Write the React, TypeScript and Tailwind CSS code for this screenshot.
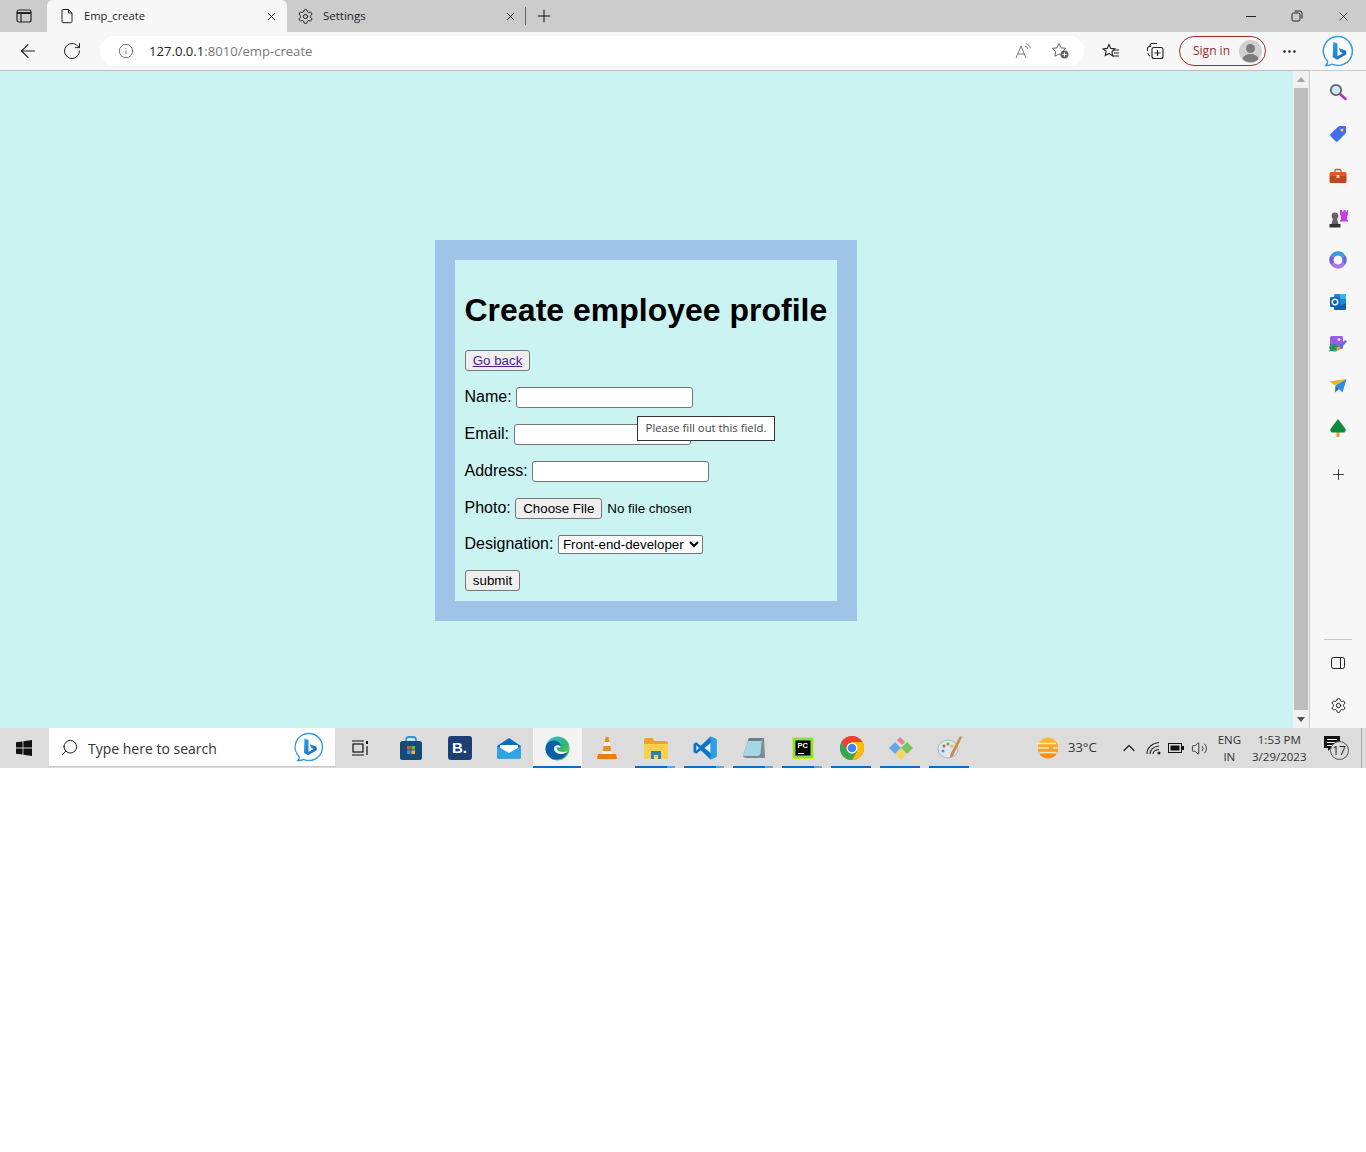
import React from 'react';
import { ArrowLeft, RotateCw, Info, X, Plus, Settings, MoreHorizontal, ChevronUp, Search, Volume2 } from 'lucide-react';

const BingLogo = ({ size = 30 }: { size?: number }) => (
  <svg width={size} height={size} viewBox="0 0 30 30">
    <defs>
      <linearGradient id="bingb" x1="0" y1="0" x2="1" y2="1">
        <stop offset="0" stopColor="#29a3e8" />
        <stop offset="1" stopColor="#1b5fc4" />
      </linearGradient>
    </defs>
    <path d="M15 1.500a13.500 13.500 0 1 1-5.600 25.800c-1.600 1-3.600 1.400-5.600 1.200 1-1 1.500-2.300 1.500-3.800A13.500 13.500 0 0 1 15 1.500z" fill="#fff" stroke="#2f9be0" strokeWidth="1.400" />
    <path d="M10.500 6.500l4 1.400v12l5-2.900-2.400-1.200-1.400-3.500 7 2.400v3.600l-8.500 5-4.200-2.400z" fill="url(#bingb)" />
  </svg>
);

const TabPageIcon = () => (
  <svg width="14" height="16" viewBox="0 0 14 16" fill="none" stroke="#222" strokeWidth="1">
    <path d="M2.500 1.500h6l3.500 3.500v8.500a1.200 1.200 0 0 1-1.200 1.200H3.200A1.200 1.200 0 0 1 2 13.500V2a.5.5 0 0 1 .5-.5z" />
    <path d="M8.500 1.500V5H12" />
  </svg>
);

const SidebarToggle = () => (
  <svg width="16" height="14" viewBox="0 0 16 14" fill="none" stroke="#222" strokeWidth="1.200">
    <rect x="1" y="1" width="14" height="12" rx="2" />
    <path d="M1 4h14" strokeWidth="2" />
    <path d="M5 4v9" />
  </svg>
);

const RestoreIcon = () => (
  <svg width="12" height="12" viewBox="0 0 12 12" fill="none" stroke="#222" strokeWidth="1">
    <rect x="1" y="3" width="8" height="8" rx="1.500" />
    <path d="M3.500 1h5.500a2 2 0 0 1 2 2v5.500" />
  </svg>
);

const ReadAloud = () => (
  <svg width="18" height="16" viewBox="0 0 18 16" fill="none" stroke="#777" strokeWidth="1">
    <path d="M1 15L6 3l5 12M3 11h6" />
    <path d="M10 3c1.500.5 2.300 1.300 2.800 2.800M11 .8c2.500.7 3.800 2.200 4.500 4.500" />
  </svg>
);

const FavAdd = () => (
  <svg width="19" height="18" viewBox="0 0 19 18">
    <path d="M8 1.500l2 4.300 4.700.6-3.400 3.200.8 4.600L8 12l-4.100 2.200.8-4.600L1.300 6.400 6 5.800z" fill="none" stroke="#666" strokeWidth="1" />
    <circle cx="13.500" cy="12.500" r="4" fill="#666" />
    <path d="M13.500 10.500v4M11.500 12.500h4" stroke="#fff" strokeWidth="1" />
  </svg>
);

const Favorites = () => (
  <svg width="18" height="17" viewBox="0 0 18 17" fill="none" stroke="#222" strokeWidth="1.100">
    <path d="M7 1.500l1.800 3.900 4.200.5-3.100 2.900.8 4.200L7 10.400l-3.700 2.100.8-4.200L1 5.900l4.200-.5z" />
    <path d="M12 7h5M12 10h5M11 13h6" />
  </svg>
);

const Collections = () => (
  <svg width="18" height="18" viewBox="0 0 18 18" fill="none" stroke="#222" strokeWidth="1.100">
    <path d="M4 5V3.500A2 2 0 0 1 6 1.500h5" />
    <path d="M1.500 9V6.500a2 2 0 0 1 2-2H5M2 11c0 1.500.5 2.500 2 3" />
    <rect x="6" y="5.500" width="11" height="11" rx="2" />
    <path d="M11.500 8v6M8.500 11h6" />
  </svg>
);

const Avatar = () => (
  <svg width="23" height="23" viewBox="0 0 23 23">
    <circle cx="11.500" cy="11.500" r="11.500" fill="#d1d1d1" />
    <circle cx="11.500" cy="8.500" r="4.500" fill="#7c7c7c" />
    <path d="M3.500 19c1-3.500 4-5 8-5s7 1.500 8 5a11.500 11.500 0 0 1-16 0z" fill="#7c7c7c" />
  </svg>
);

const SideSearch = () => (
  <svg width="18" height="18" viewBox="0 0 18 18">
    <path d="M11 11l5.500 5" stroke="#c026d3" strokeWidth="2.600" strokeLinecap="round" />
    <circle cx="7" cy="7" r="5.200" fill="#cfe6f5" stroke="#5f6368" strokeWidth="1.800" />
  </svg>
);

const SideTag = () => (
  <svg width="18" height="18" viewBox="0 0 18 18">
    <path d="M10.500 1h5.300A1.200 1.200 0 0 1 17 2.200v5.300a1.500 1.500 0 0 1-.5 1.100L8.800 16.300a1.600 1.600 0 0 1-2.200 0l-5-5a1.600 1.600 0 0 1 0-2.200l7.800-7.700a1.500 1.500 0 0 1 1.100-.4z" fill="#3f6ff0" />
    <circle cx="13" cy="5" r="1.600" fill="#f5c14e" />
  </svg>
);

const SideTools = () => (
  <svg width="18" height="16" viewBox="0 0 18 16">
    <path d="M6 4V2.500A1 1 0 0 1 7 1.500h4a1 1 0 0 1 1 1V4" fill="none" stroke="#8a6a5a" strokeWidth="1.300" />
    <path d="M2 4h14a1.500 1.500 0 0 1 1.500 1.500V8H.5V5.500A1.500 1.500 0 0 1 2 4z" fill="#e0592a" />
    <path d="M.5 8h17v5.500A1.500 1.500 0 0 1 16 15H2a1.500 1.500 0 0 1-1.500-1.500z" fill="#c4441c" />
    <rect x="7.500" y="7" width="3" height="3" rx=".5" fill="#f3d1b8" />
  </svg>
);

const SideChess = () => (
  <svg width="19" height="19" viewBox="0 0 19 19">
    <path d="M11 1h2v1.500h1.500V1h2v1.500H18V1h1v5l-1 1v4h1v1.500h-8V11h1V7l-1-1z" fill="#c63de8" />
    <circle cx="6" cy="7" r="3.400" fill="#666" />
    <path d="M4 9.500h4l1.500 5.500h-7z" fill="#666" />
    <path d="M.5 15h11v3.500H.5z" fill="#333" />
  </svg>
);

const SideOffice = () => (
  <svg width="18" height="18" viewBox="0 0 18 18" fill="none" strokeWidth="4.200">
    <path d="M3.500 12.500A6.500 6.500 0 0 1 3.500 5.500" stroke="#7a5ad8" />
    <path d="M3.500 5.500A6.500 6.500 0 0 1 14.500 5.500" stroke="#3b9be0" />
    <path d="M14.500 5.500A6.500 6.500 0 0 1 14.500 12.500" stroke="#5b6fe0" />
    <path d="M14.500 12.500A6.500 6.500 0 0 1 3.500 12.500" stroke="#a877e8" />
  </svg>
);

const SideOutlook = () => (
  <svg width="18" height="18" viewBox="0 0 18 18">
    <rect x="5" y="1" width="12" height="16" rx="1.500" fill="#1e88d8" />
    <path d="M5 10l6 3 6-3v5.500A1.500 1.500 0 0 1 15.500 17h-9A1.500 1.500 0 0 1 5 15.500z" fill="#0f5fa8" />
    <rect x="11" y="1" width="6" height="5" fill="#37b0ee" />
    <rect x="1" y="4" width="10" height="10" rx="1.500" fill="#0a63b5" />
    <circle cx="6" cy="9" r="2.800" fill="none" stroke="#fff" strokeWidth="1.400" />
  </svg>
);

const SideImage = () => (
  <svg width="20" height="18" viewBox="0 0 20 18">
    <rect x="2" y="1" width="13" height="13" rx="1.500" fill="#9a5bea" />
    <circle cx="11" cy="4.500" r="1.500" fill="#f1d8ff" />
    <path d="M1 12l5-4 6 5v2H2z" fill="#1f9a66" />
    <path d="M10 12l7-7 2 1.500-7 7.500z" fill="#5a6df0" />
    <circle cx="10.500" cy="13.500" r="2" fill="#e8a52a" />
    <path d="M1 16c3-1.500 5 .8 8-.5" fill="none" stroke="#2b8f5f" strokeWidth="1.200" />
  </svg>
);

const SideSend = () => (
  <svg width="18" height="14" viewBox="0 0 18 14">
    <path d="M0 2.500L17.500 0 6.500 6.500z" fill="#f0b32a" />
    <path d="M17.500 0L6.500 6.500l7 7z" fill="#2a8fe0" />
    <path d="M6.500 6.500l-.5 7 4-3.500z" fill="#2565b8" />
  </svg>
);

const SideTree = () => (
  <svg width="16" height="18" viewBox="0 0 16 18">
    <rect x="6.500" y="13" width="3" height="5" fill="#e8a02a" />
    <path d="M8 0l3.500 4.500 4 5.500c.5 1-.2 3.500-1.500 3.500H2C.7 13.500 0 11 .5 10l4-5.500z" fill="#0f8a3c" />
  </svg>
);

const PanelIcon = () => (
  <svg width="14" height="12" viewBox="0 0 14 12" fill="none" stroke="#222" strokeWidth="1">
    <rect x=".5" y=".5" width="13" height="11" rx="2" />
    <path d="M9.500 .5v11" />
  </svg>
);

const WinLogo = () => (
  <svg width="16" height="16" viewBox="0 0 16 16" fill="#111">
    <path d="M0 2.300l6.600-.9v6.200H0zM7.400 1.300L16 0v7.600H7.400zM0 8.400h6.600v6.200L0 13.700zM7.400 8.400H16V16l-8.600-1.200z" />
  </svg>
);

const TaskView = () => (
  <svg width="18" height="16" viewBox="0 0 18 16" fill="none" stroke="#111" strokeWidth="1.200">
    <path d="M1 1h12M1 15h12" />
    <rect x="2" y="4" width="10" height="8" />
    <path d="M16 1v3" strokeWidth="2" />
    <path d="M16 6v9" />
  </svg>
);

const StoreIcon = () => (
  <svg width="24" height="24" viewBox="0 0 24 24">
    <path d="M7 6V4a3 3 0 0 1 3-3h4a3 3 0 0 1 3 3v2" fill="none" stroke="#2a9ad8" strokeWidth="1.800" />
    <rect x="1" y="5" width="22" height="19" rx="2.500" fill="#174a78" />
    <rect x="8" y="10" width="3.600" height="3.600" fill="#e8542a" />
    <rect x="12.400" y="10" width="3.600" height="3.600" fill="#5fb82a" />
    <rect x="8" y="14.400" width="3.600" height="3.600" fill="#2a9ad8" />
    <rect x="12.400" y="14.400" width="3.600" height="3.600" fill="#f5b81f" />
  </svg>
);

const MailIcon = () => (
  <svg width="26" height="22" viewBox="0 0 26 22">
    <path d="M13 1L1 9v11a1.500 1.500 0 0 0 1.500 1.500h21A1.500 1.500 0 0 0 25 20V9z" fill="#0f6cbd" />
    <path d="M4 8h18v6l-9 4-9-4z" fill="#fff" />
    <path d="M1 9l12 7 12-7v11a1.500 1.500 0 0 1-1.500 1.500h-21A1.500 1.500 0 0 1 1 20z" fill="#2fa3e6" />
  </svg>
);

const EdgeIcon = () => (
  <svg width="25" height="25" viewBox="0 0 25 25">
    <defs>
      <linearGradient id="edgeg" x1="0" y1="0" x2="1" y2="1">
        <stop offset="0" stopColor="#35c1f1" />
        <stop offset=".55" stopColor="#2cb56f" />
        <stop offset="1" stopColor="#7fd64a" />
      </linearGradient>
    </defs>
    <circle cx="12.500" cy="12.500" r="12" fill="url(#edgeg)" />
    <path d="M.5 12.500C1.500 6 7 3.500 11.500 5c3.500 1.200 4.800 4 4 6.500H9c-.5 3.500 2.500 6.500 7 6.500 2.500 0 5-1 7-2.500-1.800 5-6 8-11 8C5 23.500.5 18.500.5 12.500z" fill="#0b5da8" />
    <path d="M9 11.500c1-2.500 4-3 6.500-1.500 0 .5 0 1 0 1.500z" fill="#fff" />
    <path d="M9 11.500c-.5 3.500 2.500 6.500 7 6.500 2.500 0 5-1 7-2.500-3 .5-9 1-10.500-1.500-.7-1.200-.5-2-.5-2.500z" fill="#fff" />
  </svg>
);

const VlcIcon = () => (
  <svg width="20" height="24" viewBox="0 0 20 24">
    <path d="M8.500 1h3l1 5h-5z" fill="#f08a1d" />
    <path d="M7.500 6h5l.8 4H6.700z" fill="#f3f0ea" />
    <path d="M6.700 10h6.600l1 5H5.700z" fill="#f08a1d" />
    <path d="M5.700 15h8.600l.7 3H5z" fill="#f3f0ea" />
    <path d="M1 18h18l1 5H0z" fill="#e87b12" />
  </svg>
);

const FilesIcon = () => (
  <svg width="24" height="21" viewBox="0 0 24 21">
    <path d="M0 1.500A1.500 1.500 0 0 1 1.500 0h7l2 3h12A1.500 1.500 0 0 1 24 4.500V9H0z" fill="#e8a52a" />
    <path d="M0 6h24v13.500a1.500 1.500 0 0 1-1.500 1.500h-21A1.500 1.500 0 0 1 0 19.500z" fill="#fbd04e" />
    <rect x="7" y="13" width="10" height="8" fill="#2a7fc0" />
    <rect x="10" y="17" width="4" height="4" fill="#fbd04e" />
  </svg>
);

const VsCodeIcon = () => (
  <svg width="24" height="24" viewBox="0 0 24 24">
    <path d="M17.500 .5L23.500 3.300v17.400l-6 2.800L7.800 14.200l-4.500 3.500L.5 16.300V7.700l2.800-1.400 4.500 3.500z" fill="#0f74c4" />
    <path d="M17.500 .5l6 2.800v17.400l-6 2.800z" fill="#2b9fe6" />
    <path d="M17.500 7l-6 5 6 5z" fill="#e2eefb" />
    <path d="M3.400 9.200L6 12l-2.600 2.800z" fill="#e2eefb" />
  </svg>
);

const NotepadIcon = () => (
  <svg width="24" height="24" viewBox="0 0 24 24">
    <path d="M7 2h15l1 20H5c-2 0-4-1-4-2z" fill="#7d8b90" />
    <path d="M7 3h13l-1.500 14c-.3 2-1.500 3-3 3H1z" fill="#a6d5e6" />
    <path d="M7 2h13l-.5 3H6z" fill="#6d7f86" />
  </svg>
);

const PyCharmIcon = () => (
  <svg width="22" height="22" viewBox="0 0 22 22">
    <rect width="22" height="22" fill="#dfe62a" />
    <rect x="1" y="1" width="20" height="20" fill="#21d789" opacity=".5" />
    <rect x="3.500" y="3.500" width="15" height="15" fill="#000" />
    <path d="M6 16h6v1H6z" fill="#fff" />
    <text x="5.500" y="11" fontSize="7.500" fontWeight="700" fill="#fff" fontFamily="Liberation Sans, sans-serif">PC</text>
  </svg>
);

const ChromeIcon = () => (
  <svg width="24" height="24" viewBox="0 0 24 24">
    <circle cx="12" cy="12" r="12" fill="#ea4335" />
    <path d="M12 24a12 12 0 0 0 10.400-18H12l5.200 9z" fill="#fbbc05" />
    <path d="M12 24l5.200-9L12 12H7l-5.400-6A12 12 0 0 0 12 24z" fill="#34a853" />
    <path d="M1.600 6A12 12 0 0 1 22.400 6H12a6 6 0 0 0-5.200 9z" fill="#ea4335" />
    <circle cx="12" cy="12" r="5.500" fill="#fff" />
    <circle cx="12" cy="12" r="4.300" fill="#4285f4" />
  </svg>
);

const GemIcon = () => (
  <svg width="26" height="26" viewBox="0 0 26 26">
    <path d="M1 13l6-6 6 6-6 6z" fill="#6aa5ee" />
    <path d="M13 13l6-6 6 6-6 6z" fill="#77c45e" />
    <path d="M7 19l6-6 6 6-6 6z" fill="#f3d76a" />
    <path d="M9 5l3-3 5 5-3 3z" fill="#e8838a" />
  </svg>
);

const PaintIcon = () => (
  <svg width="26" height="26" viewBox="0 0 26 26">
    <ellipse cx="11" cy="14" rx="10" ry="9" fill="#dbe7ec" stroke="#9fb0b8" strokeWidth=".8" />
    <circle cx="7" cy="11" r="1.500" fill="#e0524a" />
    <circle cx="11" cy="9" r="1.500" fill="#59b64a" />
    <circle cx="6" cy="16" r="1.500" fill="#4a8fe0" />
    <circle cx="15" cy="11" r="1.500" fill="#efb62e" />
    <path d="M23 1l2 1-9 19-3 2 .5-4z" fill="#c98a45" />
  </svg>
);

const SunIcon = () => (
  <svg width="22" height="22" viewBox="0 0 22 22">
    <defs>
      <linearGradient id="sung" x1="0" y1="0" x2="0" y2="1">
        <stop offset="0" stopColor="#fbc02d" />
        <stop offset="1" stopColor="#f08a1d" />
      </linearGradient>
    </defs>
    <circle cx="11" cy="11" r="10.500" fill="url(#sung)" />
    <path d="M0 6.500h19M0 11h12M16 11h6M2 15.500h18" stroke="#f6e6b8" strokeWidth="1.400" />
  </svg>
);

const WifiIcon = () => (
  <svg width="16" height="14" viewBox="0 0 16 14" fill="none" stroke="#222" strokeWidth="1.100">
    <path d="M1 13C1 7 6 2 13 1.500M4 13c0-4 3.500-7.500 9-8M7 13c0-2.200 2-4 6-4.500" />
    <circle cx="13" cy="12" r="1.500" fill="#222" stroke="none" />
  </svg>
);

const BatteryIcon = () => (
  <svg width="16" height="10" viewBox="0 0 16 10">
    <rect x=".5" y=".5" width="13" height="9" fill="none" stroke="#111" strokeWidth="1" />
    <rect x="2.500" y="2.500" width="9" height="5" fill="#111" />
    <rect x="14" y="3" width="2" height="4" fill="#111" />
  </svg>
);

const NotifIcon = () => (
  <div className="relative w-[26px] h-[24px]">
    <svg width="17" height="17" viewBox="0 0 17 17" className="absolute left-0 top-0">
      <path d="M0 0h16v12H7l-3 3v-3H0z" fill="#111" />
      <path d="M3 3.500h10M3 6.500h10M3 9.500h7" stroke="#fff" strokeWidth="1" />
    </svg>
    <div className="absolute left-[6px] top-[5px] w-[19px] h-[19px] rounded-full border border-[#555] bg-[#dcdcdc] flex items-center justify-center text-[12px] text-[#222]">17</div>
  </div>
);

const taskItems: { icon: React.ReactNode; bar?: 'on' | 'stack' | 'active' }[] = [
  { icon: <div className="-translate-x-0.5"><TaskView /></div> },
  { icon: <StoreIcon /> },
  { icon: <div className="w-[24px] h-[24px] rounded-[3px] bg-[#1d3f73] flex items-center justify-center text-white text-[15px] font-bold font-['Liberation_Sans',sans-serif]">B.</div> },
  { icon: <MailIcon /> },
  { icon: <EdgeIcon />, bar: 'active' },
  { icon: <VlcIcon /> },
  { icon: <FilesIcon />, bar: 'stack' },
  { icon: <VsCodeIcon />, bar: 'stack' },
  { icon: <NotepadIcon />, bar: 'stack' },
  { icon: <PyCharmIcon />, bar: 'stack' },
  { icon: <ChromeIcon />, bar: 'on' },
  { icon: <GemIcon />, bar: 'on' },
  { icon: <PaintIcon />, bar: 'on' },
];

const sideIcons = [<SideSearch />, <SideTag />, <SideTools />, <SideChess />, <SideOffice />, <SideOutlook />, <SideImage />, <SideSend />, <SideTree />];

const App: React.FC = () => {
  return (
    <div className="w-[1366px] h-[1152px] bg-white overflow-hidden font-['Open_Sans',sans-serif]">
      {/* Tabs */}
      <div className="h-[32px] bg-[#cccccc] flex items-stretch">
        <div className="w-[47px] flex items-center justify-center"><SidebarToggle /></div>
        <div className="w-[240px] bg-[#f7f7f7] rounded-t-[6px] flex items-center pl-[13px] pr-[9px]">
          <TabPageIcon />
          <span className="ml-[10px] text-[11.200px] text-[#222]">Emp_create</span>
          <X size={13} strokeWidth={1.800} className="ml-auto text-[#111]" />
        </div>
        <div className="w-[238px] flex items-center pl-[10px] pr-[8px]">
          <Settings size={17} strokeWidth={1.300} className="text-[#111]" />
          <span className="ml-[9px] text-[11.500px] text-[#222]">Settings</span>
          <X size={13} strokeWidth={1.800} className="ml-auto text-[#111]" />
        </div>
        <div className="w-px h-[18px] bg-[#666] self-center" />
        <div className="w-[36px] flex items-center justify-center"><Plus size={20} strokeWidth={1.200} className="text-[#111]" /></div>
        <div className="ml-auto flex items-center text-[#222]">
          <div className="w-[46px] flex justify-center"><div className="w-[10px] h-px bg-[#222]" /></div>
          <div className="w-[46px] flex justify-center"><RestoreIcon /></div>
          <div className="w-[46px] flex justify-center"><X size={15} strokeWidth={1.200} /></div>
        </div>
      </div>

      {/* Toolbar */}
      <div className="h-[38px] bg-[#f7f7f7] flex items-center">
        <div className="w-[56px] pl-[17px]"><ArrowLeft size={22} strokeWidth={1.300} className="text-[#222]" /></div>
        <div className="w-[44px] pl-[6px]"><RotateCw size={20} strokeWidth={1.200} className="text-[#222]" /></div>
        <div className="w-[984px] h-[30px] bg-white rounded-full flex items-center pl-[18px]">
          <Info size={16} strokeWidth={1.100} className="text-[#444]" />
          <span className="ml-[15px] pt-px text-[13.100px] text-[#222]">127.0.0.1<span className="text-[#777]">:8010/emp-create</span></span>
          <div className="ml-auto flex items-center">
            <ReadAloud />
            <div className="ml-[18px] mr-[14px]"><FavAdd /></div>
          </div>
        </div>
        <div className="ml-[18px]"><Favorites /></div>
        <div className="ml-[26px]"><Collections /></div>
        <div className="ml-[15px] w-[87px] h-[30px] rounded-full border border-[#a52a2a] flex items-center pl-[13px] pr-[3px] justify-between">
          <span className="text-[12px] text-[#9b2a2a]">Sign in</span>
          <Avatar />
        </div>
        <div className="ml-[15px]"><MoreHorizontal size={17} strokeWidth={1.500} className="text-[#111]" /></div>
        <div className="ml-[24px]"><BingLogo size={32} /></div>
      </div>

      {/* Browser body */}
      <div className="h-[658px] flex">
        <main className="w-[1293px] bg-[#cbf3f2] border-t border-[#bdbdbd] pt-[169px] pl-[435px] relative">
          <div className="w-[422px] h-[381px] border-[20px] border-[#a0c4e8] p-[10px] font-['Liberation_Sans',Arial,sans-serif] text-black">
            <h1 className="h-[80px] -ml-[0.5px] flex items-center text-[32px] font-bold whitespace-nowrap">Create employee profile</h1>
            <div className="h-[21px] w-[65px] border border-[#767676] rounded-[3px] bg-[#efefef] flex items-center justify-center text-[13.330px] text-[#551a8b] underline">Go back</div>
            <div className="mt-[16px] h-[21px] flex items-center text-[16px]">
              <label className="pb-[2px] -ml-[0.5px]">Name:</label>
              <input readOnly className="ml-[4.500px] w-[177px] h-[21px] bg-white border border-[#767676] rounded-[3px]" />
            </div>
            <div className="mt-[16px] h-[21px] flex items-center text-[16px]">
              <label className="pb-[2px] -ml-[0.5px]">Email:</label>
              <input readOnly className="ml-[5.500px] w-[177px] h-[21px] bg-white border border-[#767676] rounded-[3px]" />
            </div>
            <div className="mt-[16px] h-[21px] flex items-center text-[16px]">
              <label className="pb-[2px] -ml-[0.5px]">Address:</label>
              <input readOnly className="ml-[4.500px] w-[177px] h-[21px] bg-white border border-[#767676] rounded-[3px]" />
            </div>
            <div className="mt-[16px] h-[21px] flex items-center text-[16px]">
              <label className="pb-[2px] -ml-[0.5px]">Photo:</label>
              <button className="ml-[4.500px] w-[87px] h-[21px] bg-[#efefef] border border-[#767676] rounded-[3px] text-[13.330px]">Choose File</button>
              <span className="ml-[5px] text-[13.330px]">No file chosen</span>
            </div>
            <div className="mt-[16px] h-[19px] flex items-center text-[16px]">
              <label className="pb-[2px] -ml-[0.5px]">Designation:</label>
              <select className="ml-[4.500px] w-[145px] h-[19px] bg-white border border-[#767676] rounded-[2px] text-[13.330px]">
                <option>Front-end-developer</option>
              </select>
            </div>
            <button className="mt-[16px] block w-[55px] h-[21px] bg-[#efefef] border border-[#767676] rounded-[3px] text-[13.330px]">submit</button>
          </div>
          {/* validation bubble */}
          <div className="absolute left-[637px] top-[345px] w-[138px] h-[25px] border border-[#333] bg-white flex items-center justify-center text-[11.300px] text-[#444]">Please fill out this field.</div>
        </main>

        {/* Scrollbar */}
        <div className="w-[16px] bg-[#f1f1f1] border-t border-[#bdbdbd] flex flex-col items-center">
          <div className="h-[17px] flex items-center justify-center">
            <div className="w-0 h-0 border-x-[4px] border-x-transparent border-b-[5px] border-b-[#a3a3a3]" />
          </div>
          <div className="w-[14px] flex-1 bg-[#bdbdbd]" />
          <div className="h-[18px] flex items-center justify-center">
            <div className="w-0 h-0 border-x-[4px] border-x-transparent border-t-[5px] border-t-[#505050]" />
          </div>
        </div>

        {/* Edge sidebar */}
        <aside className="flex-1 bg-[#f7f7f7] border-l border-t border-[#c9c9c9] flex flex-col items-center">
          {sideIcons.map((icon, i) => (
            <div key={i} className="h-[42px] flex items-center justify-center">{icon}</div>
          ))}
          <div className="mt-[4px] h-[42px] flex items-center justify-center"><Plus size={17} strokeWidth={1.100} className="text-[#111]" /></div>
          <div className="mt-auto w-[28px] h-px bg-[#c4c4c4]" />
          <div className="h-[44px] pt-[2px] flex items-center justify-center"><PanelIcon /></div>
          <div className="h-[44px] pb-[2px] flex items-center justify-center"><Settings size={17} strokeWidth={1.300} className="text-[#111]" /></div>
        </aside>
      </div>

      {/* Taskbar */}
      <div className="h-[40px] bg-[#dcdcdc] flex items-stretch">
        <div className="w-[49px] flex items-center justify-center -translate-x-px"><WinLogo /></div>
        <div className="w-[286px] h-[39px] bg-white flex items-center border-b border-[#c8c8c8] pl-[11px] pr-[11px]">
          <Search size={19} strokeWidth={1.200} className="text-[#111] -scale-x-100" />
          <span className="ml-[9px] pt-[2px] text-[14px] text-[#333]">Type here to search</span>
          <div className="ml-auto"><BingLogo size={30} /></div>
        </div>
        <div className="w-[2px]" />
        {taskItems.map((item, i) => (
          <div key={i} className={`w-[49px] relative flex items-center justify-center ${item.bar === 'active' ? 'bg-[#f3f3f3]' : ''}`}>
            {item.icon}
            {item.bar === 'active' && <div className="absolute left-0 right-px bottom-0 h-[2px] bg-[#0a6cc4]" />}
            {item.bar === 'on' && <div className="absolute left-[4px] right-[5px] bottom-0 h-[2px] bg-[#0a6cc4]" />}
            {item.bar === 'stack' && <div className="absolute left-[4px] right-[5px] bottom-0 h-[2px] bg-[linear-gradient(to_right,#0a6cc4_80%,#5fa5dc_80%)]" />}
          </div>
        ))}
        <div className="ml-[63px] flex items-center">
          <SunIcon />
          <span className="ml-[9px] text-[13px] text-[#333]">33°C</span>
        </div>
        <div className="ml-[22px] flex items-center"><ChevronUp size={20} strokeWidth={1.500} className="text-[#222]" /></div>
        <div className="ml-[7px] flex items-center"><WifiIcon /></div>
        <div className="ml-[6px] flex items-center"><BatteryIcon /></div>
        <div className="ml-[7px] flex items-center"><Volume2 size={17} strokeWidth={1.200} className="text-[#222]" /></div>
        <div className="ml-[10px] flex flex-col items-center justify-center text-[11.500px] leading-[17px] text-[#333]">
          <span>ENG</span>
          <span>IN</span>
        </div>
        <div className="ml-[11px] flex flex-col items-center justify-center text-[11.500px] leading-[17px] text-[#333]">
          <span>1:53 PM</span>
          <span>3/29/2023</span>
        </div>
        <div className="ml-[17px] flex items-center"><NotifIcon /></div>
        <div className="ml-auto mr-[4px] w-px bg-[#aaaaaa]" />
      </div>
    </div>
  );
};

export default App;
